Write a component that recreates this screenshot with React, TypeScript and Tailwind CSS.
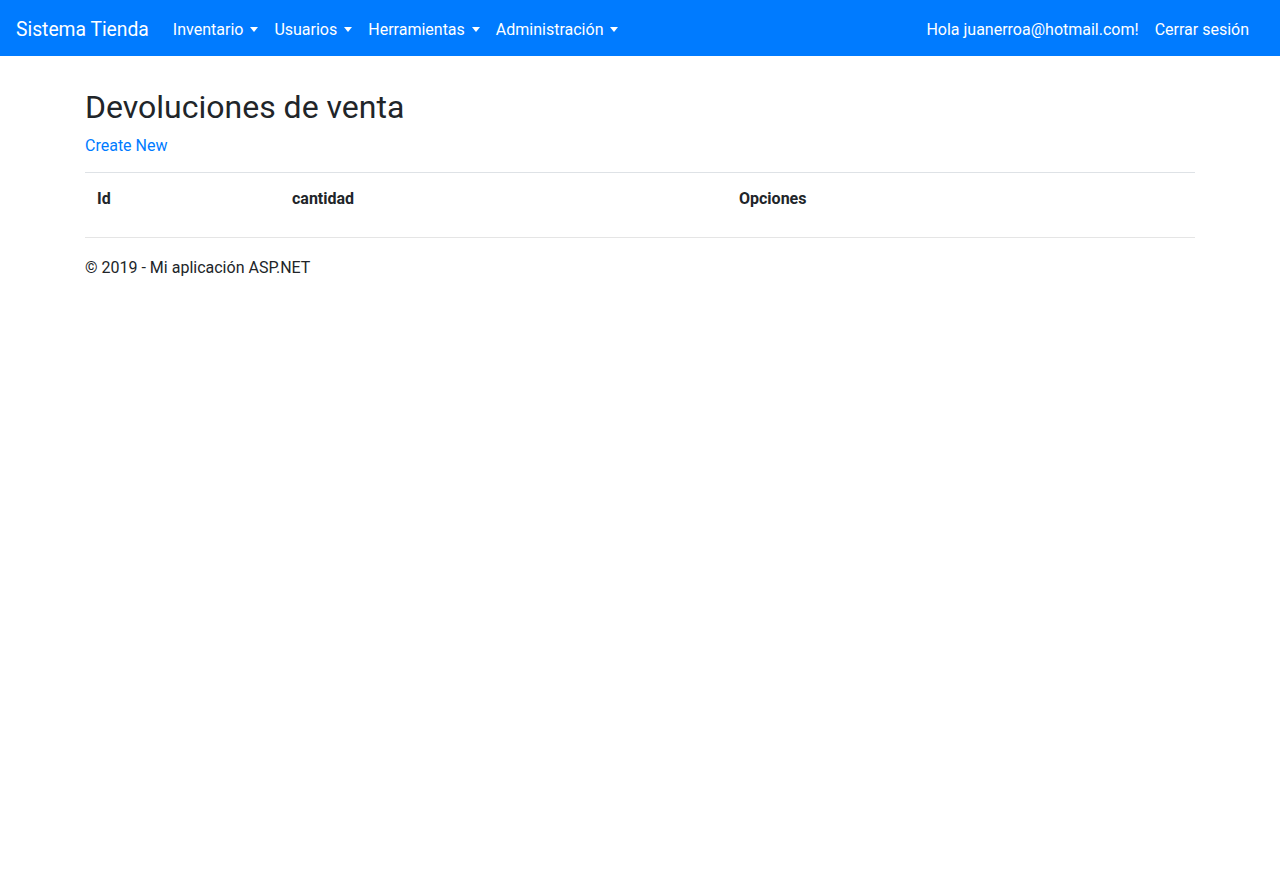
const Caret = () => (
  <span className="inline-block ml-[7px] align-[3px] w-0 h-0 border-t-[5px] border-t-white border-x-[4px] border-x-transparent" />
)

const NavItem = ({ label }: { label: string }) => (
  <a href="#" className="px-2 py-2 text-white whitespace-nowrap">
    {label}
    <Caret />
  </a>
)

export default function App() {
  return (
    <div className="min-h-[888px] bg-white text-[#212529] text-base leading-6 font-['Roboto',sans-serif]">
      {/* Navbar */}
      <nav className="bg-[#007bff] h-14 pl-4 pt-1 flex items-center">
        <a href="#" className="text-white text-[19.3px] leading-[30px] mr-[16px]">Sistema Tienda</a>
        <div className="flex">
          <NavItem label="Inventario" />
          <NavItem label="Usuarios" />
          <NavItem label="Herramientas" />
          <NavItem label="Administración" />
        </div>
        <div className="ml-auto flex mr-[23px]">
          <a href="#" className="px-2 py-2 text-white">Hola juanerroa@hotmail.com!</a>
          <a href="#" className="px-2 py-2 text-white">Cerrar sesión</a>
        </div>
      </nav>

      {/* Contenido */}
      <div className="w-[1140px] mx-auto px-[15px] pt-[32px]">
        <h2 className="text-[32px] leading-[1.2] font-normal mb-2">Devoluciones de venta</h2>
        <p className="mb-[14px]">
          <a href="#" className="text-[#007bff]">Create New</a>
        </p>

        <table className="w-full mb-4 border-collapse">
          <tbody>
            <tr>
              <th className="w-[195px] px-3 pt-[14px] pb-[10px] text-left font-bold border-t border-[#dee2e6]">Id</th>
              <th className="w-[447px] px-3 pt-[14px] pb-[10px] text-left font-bold border-t border-[#dee2e6]">cantidad</th>
              <th className="px-3 pt-[14px] pb-[10px] text-left font-bold border-t border-[#dee2e6]">Opciones</th>
            </tr>
          </tbody>
        </table>

        <hr className="border-t border-[#e5e5e5] mt-4 mb-[18px]" />
        <footer>
          <p>© 2019 - Mi aplicación ASP.NET</p>
        </footer>
      </div>
    </div>
  )
}
